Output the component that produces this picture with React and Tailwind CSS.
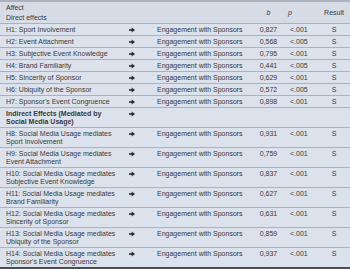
import React from "react";

const direct = [
  ["H1: Sport Involvement", "0,827", "<.001"],
  ["H2: Event Attachment", "0,568", "<.005"],
  ["H3: Subjective Event Knowledge", "0,795", "<.001"],
  ["H4: Brand Familiarity", "0,441", "<.005"],
  ["H5: Sincerity of Sponsor", "0,629", "<.001"],
  ["H6: Ubiquity of the Sponsor", "0,572", "<.005"],
  ["H7: Sponsor's Event Congruence", "0,898", "<.001"],
];

const indirect = [
  ["H8: Social Media Usage mediates", "Sport Involvement", "0,931"],
  ["H9: Social Media Usage mediates", "Event Attachment", "0,759"],
  ["H10: Social Media Usage mediates", "Subjective Event Knowledge", "0,837"],
  ["H11: Social Media Usage mediates", "Brand Familiarity", "0,627"],
  ["H12: Social Media Usage mediates", "Sincerity of Sponsor", "0,631"],
  ["H13: Social Media Usage mediates", "Ubiquity of the Sponsor", "0,859"],
  ["H14: Social Media Usage mediates", "Sponsor's Event Congruence", "0,937"],
];

const grid = "grid grid-cols-[122px_33px_97px_33px_33px_32px]";

// small heavy arrow used between cause and effect
const Arrow = () => (
  <svg width="6" height="6" viewBox="0 0 6 6" className="mt-[1px]">
    <rect x="0" y="2.2" width="3.2" height="1.6" fill="#2b2b2b" />
    <path d="M2.6 0.6 L6 3 L2.6 5.4 Z" fill="#2b2b2b" />
  </svg>
);

const Row = ({ label, b, p, last }) => (
  <div className={`${grid} pt-[2px] pb-[1px] bg-[#dbe2eb] ${last ? "" : "border-b border-[#aab2be]"}`}>
    <div className="pl-[6px]">{label}</div>
    <div className="pl-[7px]"><Arrow /></div>
    <div className="pl-[2px]">{b !== undefined ? "Engagement with Sponsors" : ""}</div>
    <div className="text-center">{b}</div>
    <div className="pl-[5px]">{p}</div>
    <div className="text-center">{b !== undefined ? "S" : ""}</div>
  </div>
);

export default function App() {
  return (
    <div className="w-[350px] h-[269px] overflow-hidden bg-[#dbe2eb] font-['Liberation_Sans'] text-[7px] leading-[8px] text-[#3a3a3a]">
      {/* header */}
      <div className={`${grid} border-t-2 border-[#4d4d4d] bg-[#d5dce6] border-b border-[#aab2be] pt-[2px]`}>
        <div className="pl-[6px]">
          <div className="h-[10px]">Affect</div>
          <div className="h-[9px]">Direct effects</div>
        </div>
        <div />
        <div />
        <div className="text-center italic pt-[5px]">b</div>
        <div className="pl-[3px] italic pt-[5px]">p</div>
        <div className="text-center pt-[5px]">Result</div>
      </div>
      {direct.map(([l, b, p]) => (
        <Row key={l} label={l} b={b} p={p} />
      ))}
      <div className={`${grid} pt-[2px] pb-[1px] border-b border-[#aab2be]`}>
        <div className="pl-[6px] font-bold">
          Indirect Effects (Mediated by
          <br />
          Social Media Usage)
        </div>
        <div className="pl-[7px]"><Arrow /></div>
      </div>
      {indirect.map(([a, c, b], i) => (
        <Row
          key={a}
          label={<>{a}<br />{c}</>}
          b={b}
          p="<.001"
          last={i === indirect.length - 1}
        />
      ))}
      <div className="border-t-2 border-[#4d4d4d]" />
    </div>
  );
}
